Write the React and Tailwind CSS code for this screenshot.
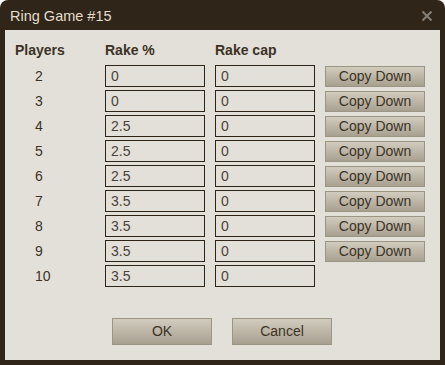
const rows = [
  { players: 2, rake: '0', cap: '0', copy: true },
  { players: 3, rake: '0', cap: '0', copy: true },
  { players: 4, rake: '2.5', cap: '0', copy: true },
  { players: 5, rake: '2.5', cap: '0', copy: true },
  { players: 6, rake: '2.5', cap: '0', copy: true },
  { players: 7, rake: '3.5', cap: '0', copy: true },
  { players: 8, rake: '3.5', cap: '0', copy: true },
  { players: 9, rake: '3.5', cap: '0', copy: true },
  { players: 10, rake: '3.5', cap: '0', copy: false },
];

function Field({ value }) {
  return (
    <div className="w-[100px] h-[22px] border border-[#2e2418] flex items-center pl-[5px] text-[14px] leading-4 text-[#4a4438]">
      {value}
    </div>
  );
}

function Btn({ children, className = '' }) {
  return (
    <button
      type="button"
      className={`w-[100px] border border-[#9c9584] bg-gradient-to-b from-[#d2ccbf] to-[#a8a08f] text-[14px] leading-4 text-[#3b3325] pb-[2px] ${className}`}
    >
      {children}
    </button>
  );
}

export default function App() {
  return (
    <div className="w-[445px] h-[365px] bg-white" style={{ fontFamily: '"Liberation Sans", Arial, sans-serif' }}>
      <div className="w-[445px] h-[365px] bg-[#2f2519] rounded-t-[8px] flex flex-col px-[5px] pb-[5px]">
        {/* Title bar */}
        <div className="h-[30px] flex items-center justify-between pl-[5px] pr-[7px]">
          <span className="text-[14.5px] leading-4 text-[#e4dccb] pt-[1px]">Ring Game #15</span>
          <svg width="12" height="12" viewBox="0 0 12 12" className="mt-[1px]">
            <path d="M1.5 1.5 L10.5 10.5 M10.5 1.5 L1.5 10.5" stroke="#85807a" strokeWidth="2" />
          </svg>
        </div>

        {/* Content */}
        <div className="flex-1 bg-[#e3dfd9] pt-[12px] pl-[10px]">
          <div className="flex text-[14px] leading-4 font-bold text-[#3b3325]">
            <div className="w-[90px]">Players</div>
            <div className="w-[110px]">Rake %</div>
            <div>Rake cap</div>
          </div>

          <div className="mt-[7px] flex flex-col gap-[3px]">
            {rows.map((r) => (
              <div key={r.players} className="flex items-center h-[22px]">
                <div className="w-[90px] pl-[20px] text-[14px] leading-4 text-[#3b3325]">{r.players}</div>
                <Field value={r.rake} />
                <div className="w-[10px]" />
                <Field value={r.cap} />
                <div className="w-[10px]" />
                {r.copy && <Btn className="h-[21px] mt-[1px]">Copy Down</Btn>}
              </div>
            ))}
          </div>

          <div className="mt-[31px] flex gap-[20px] pl-[97px]">
            <Btn className="h-[27px]">OK</Btn>
            <Btn className="h-[27px]">Cancel</Btn>
          </div>
        </div>
      </div>
    </div>
  );
}
